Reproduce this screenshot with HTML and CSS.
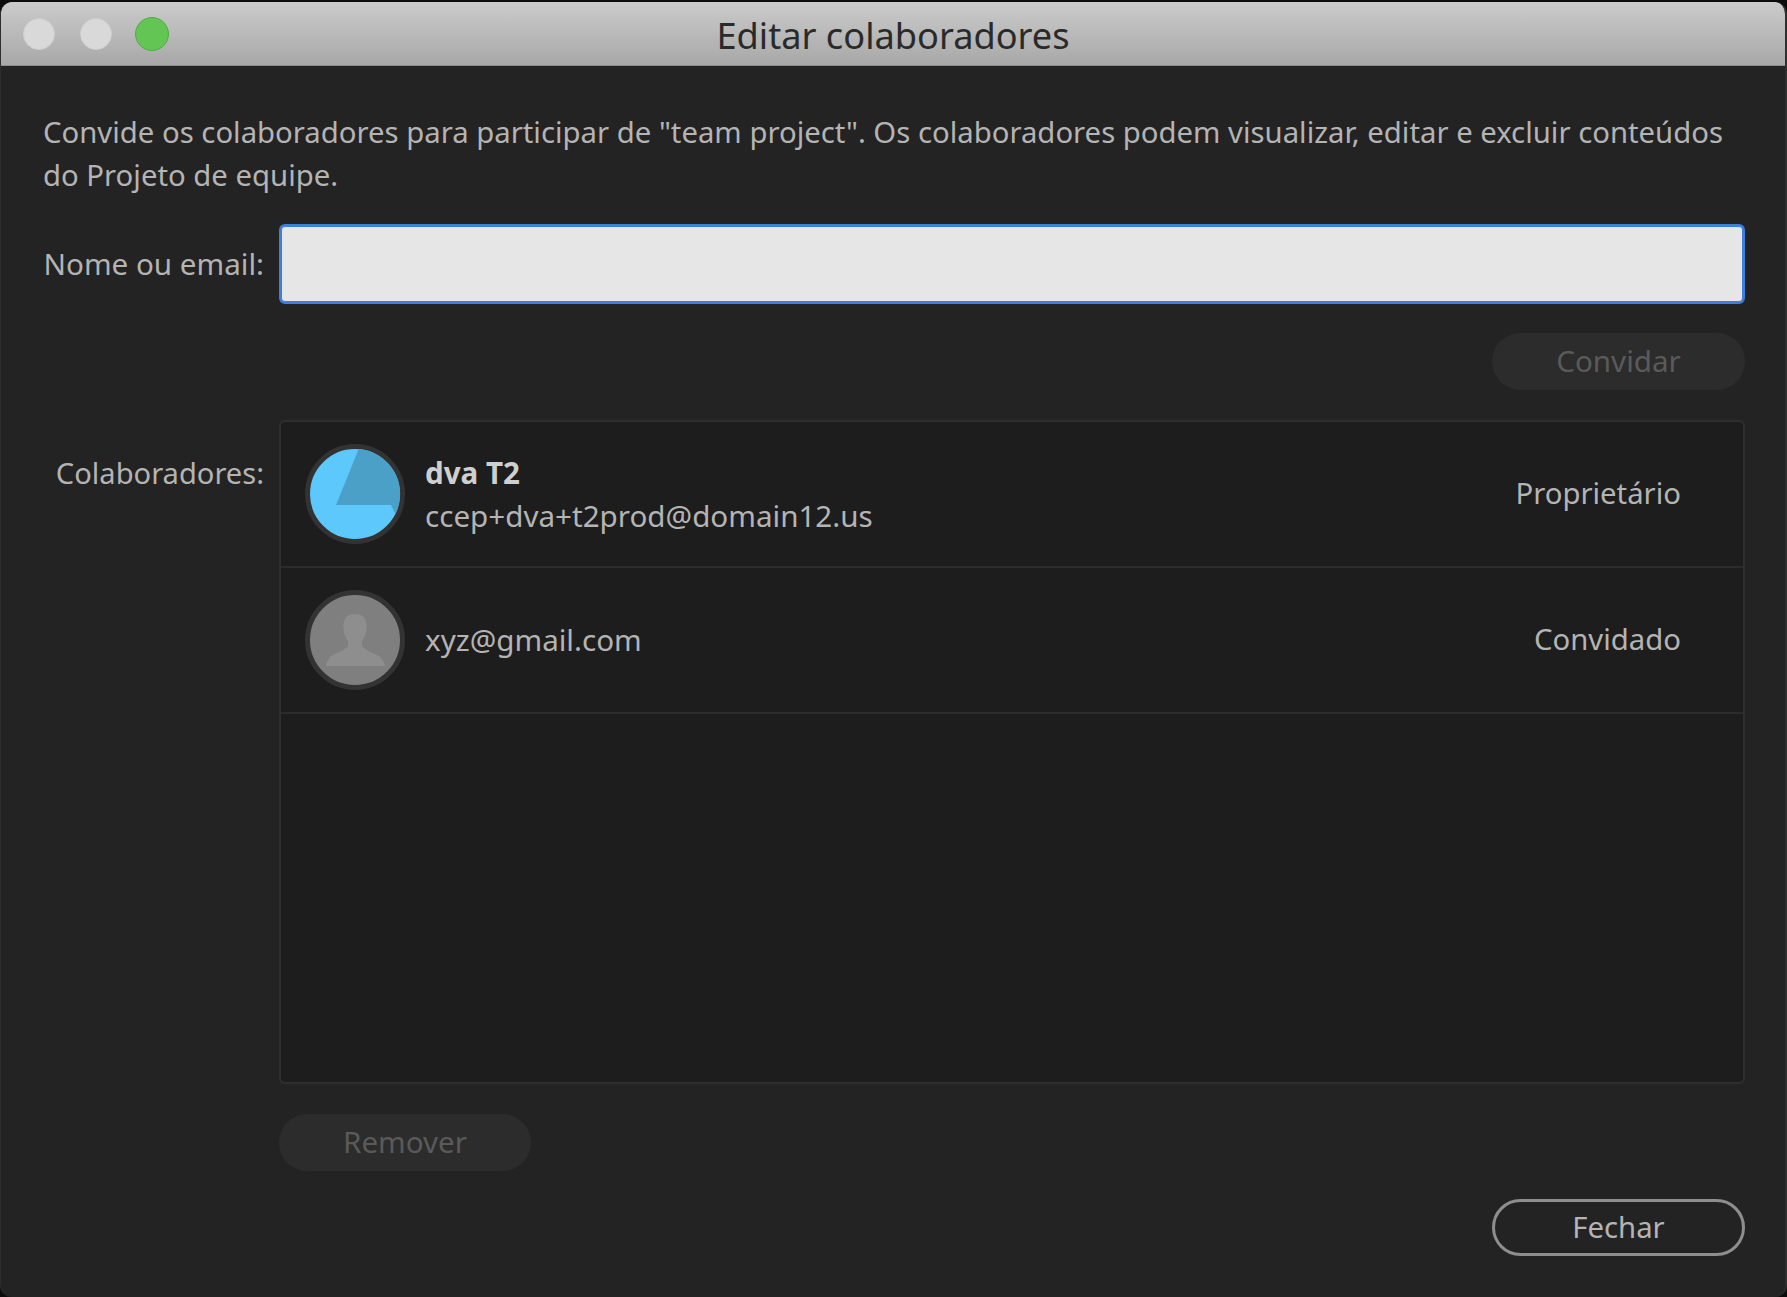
FILE: index.html
```html
<!DOCTYPE html>
<html lang="pt">
<head>
<meta charset="utf-8">
<title>Editar colaboradores</title>
<link rel="stylesheet" href="styles.css">
</head>
<body>
<div class="window">
  <header class="titlebar">
    <div class="lights">
      <span class="light"></span>
      <span class="light"></span>
      <span class="light light-green"></span>
    </div>
    <h1 class="title">Editar colaboradores</h1>
  </header>
  <main class="content">
    <p class="intro">Convide os colaboradores para participar de "team project". Os colaboradores podem visualizar, editar e excluir conteúdos do Projeto de equipe.</p>
    <div class="form">
      <label class="label label-name" for="who">Nome ou email:</label>
      <input class="field" id="who" type="text">
      <div class="actions-right"><button class="btn btn-off" type="button">Convidar</button></div>
      <div class="label label-list">Colaboradores:</div>
      <div class="list">
        <div class="row">
          <svg class="avatar" viewBox="0 0 100 100">
            <circle cx="50" cy="50" r="47.5" fill="#5cc8fc" stroke="#333" stroke-width="5"/>
            <path d="M53.7 5 A45 45 0 0 1 90.4 70 L86 61 L31 61 Z" fill="#4ba0c8"/>
          </svg>
          <div class="person">
            <div class="name">dva T2</div>
            <div class="mail">ccep+dva+t2prod@domain12.us</div>
          </div>
          <div class="role">Proprietário</div>
        </div>
        <div class="row">
          <svg class="avatar" viewBox="0 0 100 100">
            <circle cx="50" cy="50" r="47.5" fill="#7f7f7f" stroke="#333" stroke-width="5"/>
            <path d="M50 24 C44 24 39 27 38.5 34 C38 42 40 47 43 51 L43 56 C40 60 31 63 26 66 C24 68 22 71 21 76 L80 76 C79 71 76 68 74 66 C68 63 60 60 57 56 L57 51 C60 47 62 42 61.5 34 C61 27 56 24 50 24 Z" fill="#8e8e8e"/>
          </svg>
          <div class="person person-single">
            <div class="mail">xyz@gmail.com</div>
          </div>
          <div class="role">Convidado</div>
        </div>
      </div>
      <div class="actions-left"><button class="btn btn-off btn-remove" type="button">Remover</button></div>
      <div class="actions-right actions-close"><button class="btn btn-line" type="button">Fechar</button></div>
    </div>
  </main>
</div>
</body>
</html>
```
FILE: styles.css
```css
* { box-sizing: border-box; }
html, body { margin: 0; height: 100%; background: #0c0c0c; }
body { padding-top: 2px; font-family: "Noto Sans", "Open Sans", sans-serif; }
.window {
  height: 1295px;
  background: #232323;
  border-radius: 12px;
  border-left: 1px solid #2e2e2e;
  border-right: 2px solid #2e2e2e;
  display: flex;
  flex-direction: column;
  overflow: hidden;
}
.titlebar {
  height: 64px;
  flex: none;
  display: flex;
  align-items: center;
  justify-content: center;
  position: relative;
  background: linear-gradient(#cbcbcb, #a8a8a8);
  border-bottom: 1px solid #8c8c8c;
}
.lights {
  position: absolute;
  left: 22px;
  top: 16px;
  display: flex;
  gap: 24.5px;
}
.light {
  width: 32px;
  height: 32px;
  border-radius: 50%;
  background: #d9d9d9;
  border: 1px solid #cfcfcf;
}
.light-green { background: #62c554; border: 1px solid #52ad46; width: 34px; height: 34px; margin: -1px 0 0 -1.5px; }
.title {
  margin: 0;
  padding-top: 2px;
  font-size: 36.2px;
  font-weight: 400;
  color: #2a2a2a;
}
.content { padding: 45px 40px 0 42px; flex: 1; }
.intro {
  margin: 0;
  font-size: 29.3px;
  line-height: 43px;
  color: #b4b4b4;
}
.form {
  margin-top: 27px;
  display: grid;
  grid-template-columns: 221px 1fr;
  column-gap: 15px;
}
.label {
  font-size: 29.6px;
  color: #b4b4b4;
  text-align: right;
  white-space: nowrap;
}
.label-name { line-height: 80px; }
.label-list { grid-column: 1; grid-row: 3; font-size: 29.1px; line-height: 43px; margin-top: 62px; }
.field {
  height: 80px;
  width: 100%;
  background: #e6e6e6;
  border: 3px solid #3d7fdd;
  border-radius: 6px;
  outline: none;
  padding: 0 12px;
}
.actions-right {
  grid-column: 2;
  display: flex;
  justify-content: flex-end;
  margin-top: 29px;
}
.actions-left { grid-column: 2; margin-top: 30px; display: flex; }
.actions-close { margin-top: 28px; }
.btn {
  width: 253px;
  height: 57px;
  border-radius: 29px;
  font: inherit;
  font-size: 29.6px;
  line-height: 1;
  padding: 0 0 2px;
}
.btn-remove { width: 252px; }
.btn-off { background: #2c2c2c; border: 0; color: #5a5a5a; }
.btn-line { background: transparent; border: 3px solid #8e8e8e; color: #b4b4b4; padding: 1px 0 0; font-size: 29.3px; }
.list {
  grid-column: 2;
  grid-row: 3;
  margin-top: 30px;
  height: 664px;
  background: #1d1d1d;
  border: 2px solid #2f2f2f;
  border-radius: 6px;
}
.row {
  height: 146px;
  display: flex;
  align-items: center;
  padding: 0 62px 0 23.5px;
  border-bottom: 2px solid #2c2c2c;
  color: #b4b4b4;
}
.avatar { width: 100px; height: 100px; flex: none; }
.person { margin-left: 20.5px; flex: 1; }
.person-single { padding-bottom: 2px; }
.name { font-size: 29.6px; line-height: 43px; font-weight: 700; color: #cfcfcf; }
.mail { font-size: 29.6px; line-height: 43px; }
.role { font-size: 29.3px; padding-bottom: 3px; }
```
